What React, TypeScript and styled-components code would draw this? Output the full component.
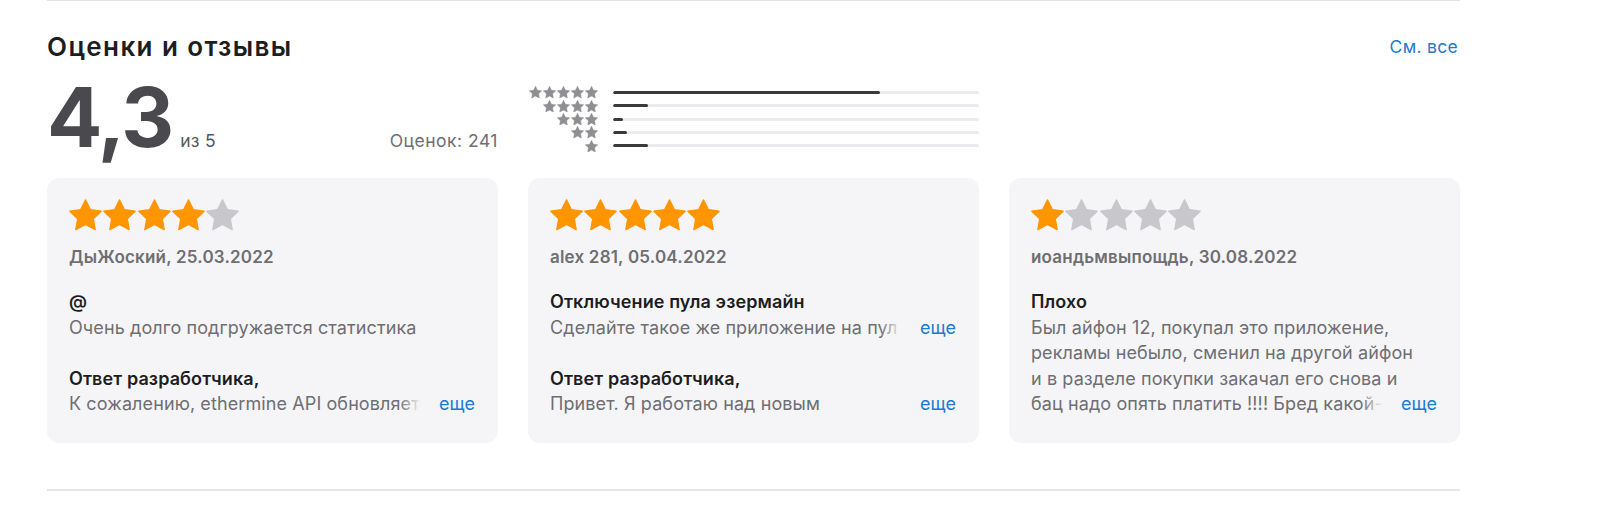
import React from "react";
import styled, { createGlobalStyle } from "styled-components";

const GlobalStyle = createGlobalStyle`
  html, body { margin: 0; padding: 0; background: #ffffff; }
  body {
    font-family: Inter, "Noto Sans", "Liberation Sans", sans-serif;
    -webkit-font-smoothing: antialiased;
  }
  * { box-sizing: border-box; }
`;

const Section = styled.section`
  margin-left: 47px;
  width: 1413px;
  padding: 30px 0 46px 0;
  border-top: 1px solid #e3e3e3;
  border-bottom: 2px solid #e6e6e6;
`;

const Header = styled.div`
  display: flex;
  align-items: center;
  justify-content: space-between;
  height: 30px;
`;

const Title = styled.h2`
  margin: 0;
  font-size: 26px;
  font-weight: 600;
  color: #1d1d1f;
  letter-spacing: 1.4px;
`;

const SeeAll = styled.a`
  font-size: 17.5px;
  color: #1a7bd0;
  text-decoration: none;
  cursor: pointer;
  letter-spacing: 0.3px;
  margin-right: 2px;
`;

const Columns = styled.div<{ $top: number }>`
  display: grid;
  grid-template-columns: repeat(3, minmax(0, 1fr));
  column-gap: 30px;
  margin-top: ${(p) => p.$top}px;
  align-items: start;
`;

const Summary = styled.div`
  display: flex;
  align-items: baseline;
  justify-content: space-between;
  height: 82px;
`;

const ScoreGroup = styled.div`
  display: flex;
  align-items: baseline;
  gap: 8px;
`;

const BigScore = styled.span`
  font-size: 82px;
  line-height: 82px;
  font-weight: 700;
  color: #4a4a4e;
  letter-spacing: -2px;
`;

const OutOf = styled.span`
  font-size: 17.5px;
  color: #57575c;
  letter-spacing: 0.3px;
`;

const Count = styled.span`
  font-size: 17.5px;
  color: #6e6e73;
  letter-spacing: 0.5px;
`;

const Histogram = styled.div`
  padding-top: 9px;
  display: flex;
  flex-direction: column;
`;

const HistRow = styled.div`
  display: grid;
  grid-template-columns: 70px 1fr;
  column-gap: 15px;
  align-items: center;
  height: 13.3px;
`;

const HistStars = styled.div`
  display: flex;
  justify-content: flex-end;
  gap: 1px;
`;

const Track = styled.div`
  height: 3px;
  border-radius: 2px;
  background: #ececf0;
  overflow: hidden;
`;

const Fill = styled.div`
  height: 100%;
  border-radius: 2px;
  background: #3a3a3c;
`;

const Card = styled.article`
  min-width: 0;
  background: #f5f5f7;
  border-radius: 12px;
  padding: 20px 23px 23px 22px;
  height: 265px;
`;

const StarRow = styled.div`
  display: flex;
  align-items: center;
  gap: 1.25px;
  height: 34px;
  margin-bottom: 15px;
`;

const Author = styled.div`
  font-size: 17px;
  line-height: 20px;
  font-weight: 600;
  color: #6e6e73;
  margin-bottom: 22px;
  letter-spacing: 0.2px;
`;

const BlockTitle = styled.div<{ $gap?: number }>`
  font-size: 18px;
  line-height: 25.5px;
  font-weight: 600;
  color: #1d1d1f;
  margin-top: ${(p) => p.$gap ?? 0}px;
  letter-spacing: 0.1px;
`;

const BodyWrap = styled.div`
  position: relative;
`;

const BodyText = styled.p<{ $lines: number }>`
  margin: 0;
  font-size: 18px;
  line-height: 25.5px;
  color: #6e6e73;
  white-space: pre;
  overflow: hidden;
  max-height: ${(p) => p.$lines * 25.5}px;
  letter-spacing: 0.1px;
`;

const More = styled.a`
  position: absolute;
  right: 0;
  bottom: 0;
  font-size: 18px;
  line-height: 25.5px;
  color: #1a7bd0;
  padding-left: 40px;
  background: linear-gradient(to right, rgba(245, 245, 247, 0) 0, #f5f5f7 22px);
  cursor: pointer;
`;

const StarSvg = ({ size, color }: { size: number; color: string }) => (
  <svg width={size} height={size * 0.952} viewBox="1.5 1.5 21 20" aria-hidden="true">
    <polygon
      points="12,2 15.09,8.26 22,9.27 17,14.14 18.18,21.02 12,17.77 5.82,21.02 7,14.14 2,9.27 8.91,8.26"
      fill={color}
      stroke={color}
      strokeWidth={0.8}
      strokeLinejoin="round"
    />
  </svg>
);

const histogram = [
  { stars: 5, pct: 73 },
  { stars: 4, pct: 9.6 },
  { stars: 3, pct: 2.7 },
  { stars: 2, pct: 3.8 },
  { stars: 1, pct: 9.6 },
];

type Review = {
  rating: number;
  author: string;
  title: string;
  body: string;
  bodyLines: number;
  bodyMore: boolean;
  reply?: string;
};

const reviews: Review[] = [
  {
    rating: 4,
    author: "ДыЖоский, 25.03.2022",
    title: "@",
    body: "Очень долго подгружается статистика",
    bodyLines: 1,
    bodyMore: false,
    reply:
      "К сожалению, ethermine API обновляет данные с задержкой, поэтому статистика может подгружаться медленно.",
  },
  {
    rating: 5,
    author: "alex 281, 05.04.2022",
    title: "Отключение пула эзермайн",
    body: "Сделайте такое же приложение на пул 2miners, пожалуйста",
    bodyLines: 1,
    bodyMore: true,
    reply: "Привет. Я работаю над новым\nприложением для разных пулов.",
  },
  {
    rating: 1,
    author: "иоандьмвыпощдь, 30.08.2022",
    title: "Плохо",
    body:
      "Был айфон 12, покупал это приложение,\nрекламы небыло, сменил на другой айфон\nи в разделе покупки закачал его снова и\nбац надо опять платить !!!! Бред какой-то\nверните покупку",
    bodyLines: 4,
    bodyMore: true,
  },
];

export default function App() {
  return (
    <>
      <GlobalStyle />
      <Section>
        <Header>
          <Title>Оценки и отзывы</Title>
          <SeeAll>См. все</SeeAll>
        </Header>

        <Columns $top={16}>
          <Summary>
            <ScoreGroup>
              <BigScore>4,3</BigScore>
              <OutOf>из 5</OutOf>
            </ScoreGroup>
            <Count>Оценок: 241</Count>
          </Summary>
          <Histogram>
            {histogram.map((h) => (
              <HistRow key={h.stars}>
                <HistStars>
                  {Array.from({ length: h.stars }).map((_, i) => (
                    <StarSvg key={i} size={13} color="#8e8e93" />
                  ))}
                </HistStars>
                <Track>
                  <Fill style={{ width: `${h.pct}%` }} />
                </Track>
              </HistRow>
            ))}
          </Histogram>
        </Columns>

        <Columns $top={19}>
          {reviews.map((r) => (
            <Card key={r.author}>
              <StarRow>
                {[1, 2, 3, 4, 5].map((n) => (
                  <StarSvg key={n} size={33} color={n <= r.rating ? "#ff9500" : "#c7c7cc"} />
                ))}
              </StarRow>
              <Author>{r.author}</Author>
              <BlockTitle>{r.title}</BlockTitle>
              <BodyWrap>
                <BodyText $lines={r.bodyLines}>{r.body}</BodyText>
                {r.bodyMore && <More>еще</More>}
              </BodyWrap>
              {r.reply && (
                <>
                  <BlockTitle $gap={25.5}>Ответ разработчика,</BlockTitle>
                  <BodyWrap>
                    <BodyText $lines={1}>{r.reply}</BodyText>
                    <More>еще</More>
                  </BodyWrap>
                </>
              )}
            </Card>
          ))}
        </Columns>
      </Section>
    </>
  );
}
